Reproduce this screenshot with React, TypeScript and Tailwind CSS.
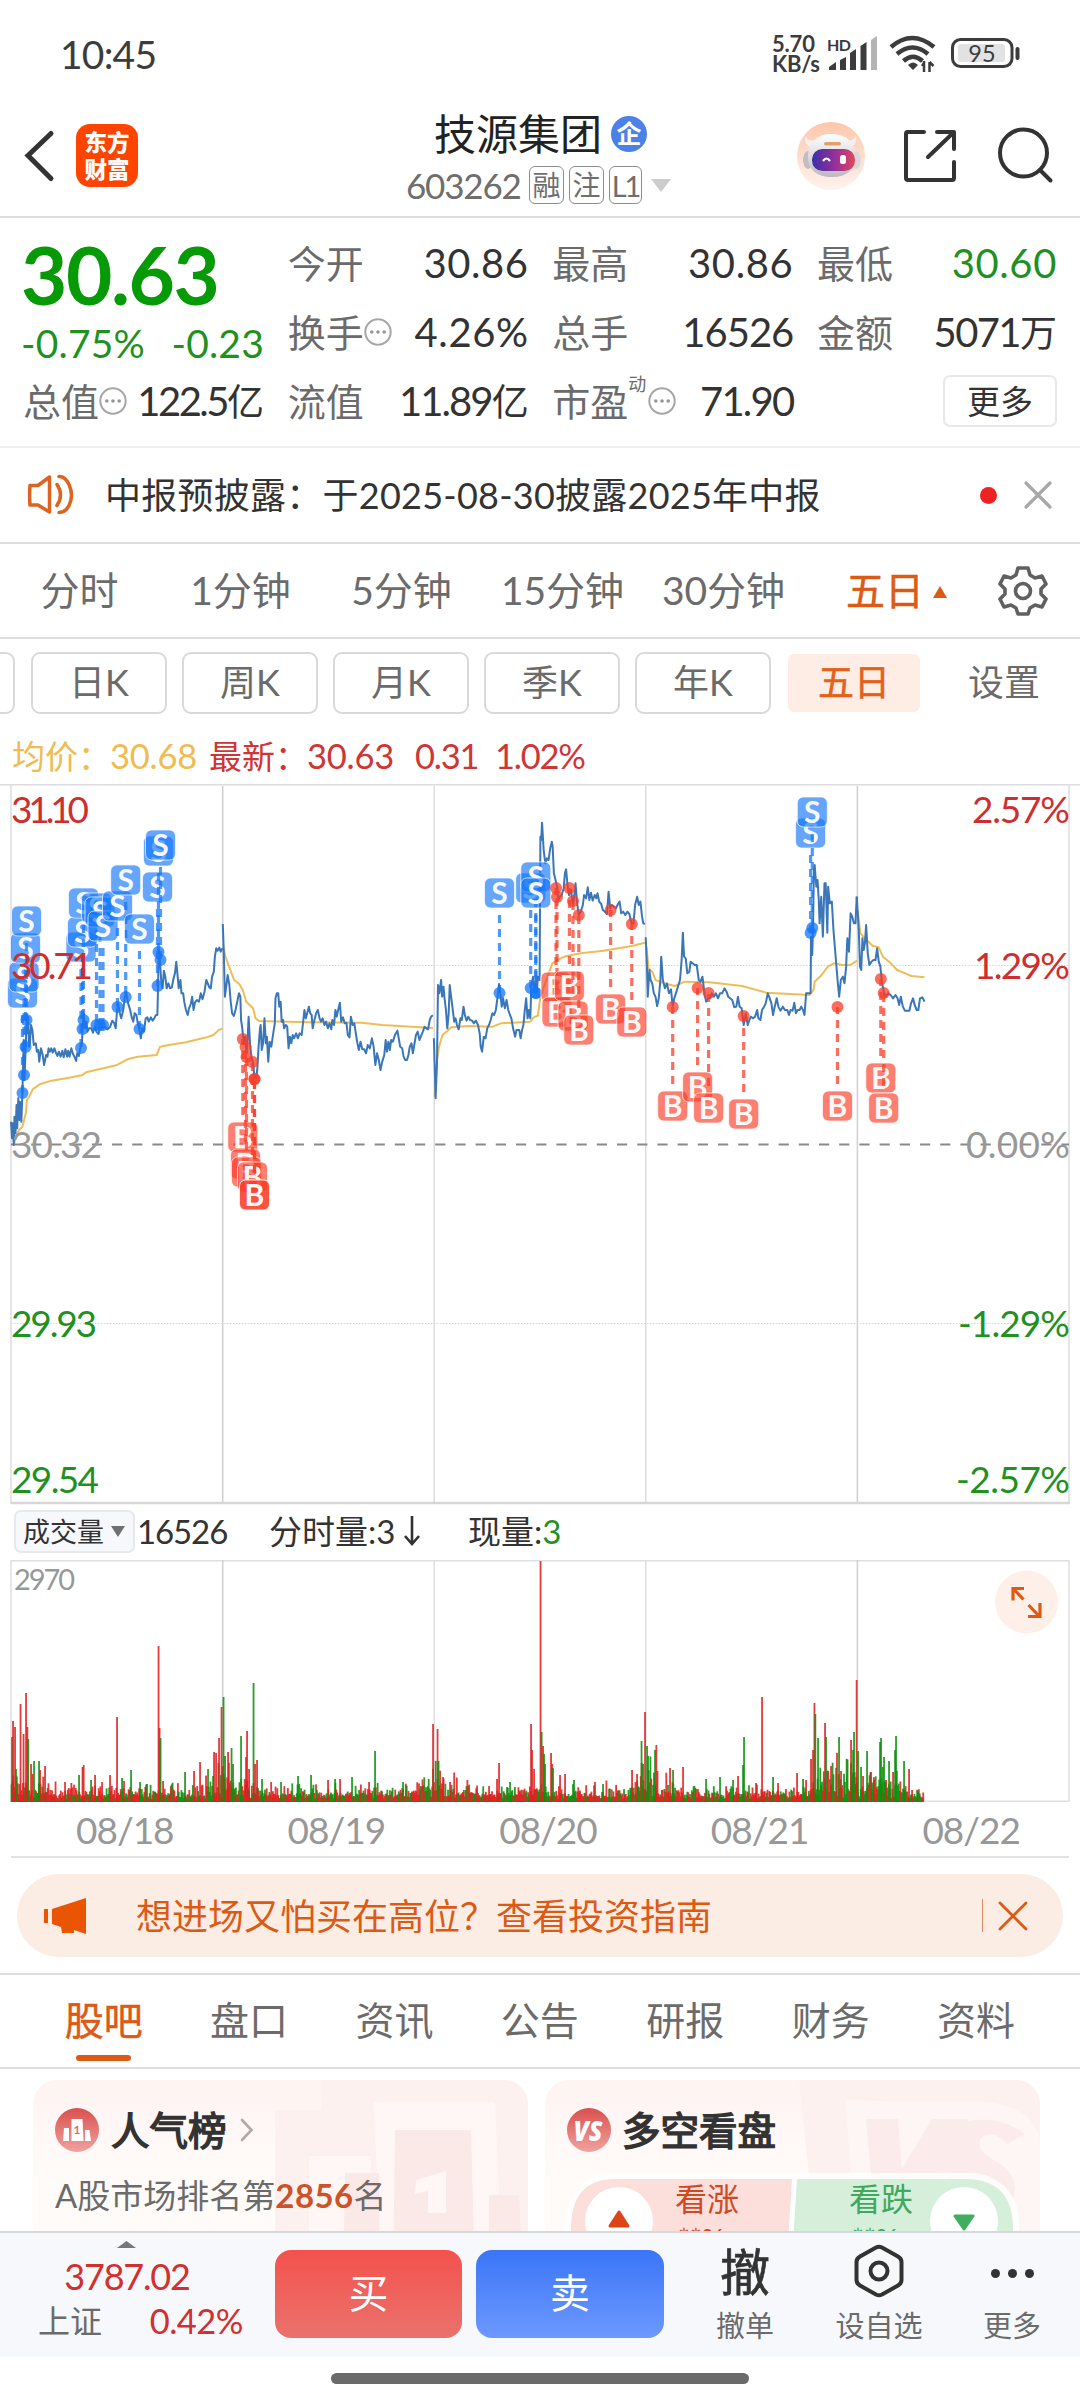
import React from "react";

const day1 =
  "32,1025 35,1075 37,1030 40,1095 42,1010 45,1060 48,975 50,1045 53,955 56,1020 58,965 62,1025 65,940 67,860 69,780 71,900 74,820 77,720 80,760 82,710 84,800 87,790 90,735 94,750 98,795 104,790 107,815 111,810 114,845 119,805 124,825 128,855 134,825 138,830 141,805 145,815 149,805 153,818 158,805 163,820 167,828 171,815 176,830 181,812 185,832 190,808 195,830 198,812 202,830 207,805 212,822 216,830 221,843 224,820 229,828 233,805 238,790 240,740 243,700 247,745 251,725 254,755 259,745 265,745 270,758 275,740 280,755 286,762 290,745 298,742 305,740 312,748 320,740 326,722 331,728 336,745 340,690 343,670 347,695 352,715 358,690 362,655 366,635 372,670 378,690 382,710 387,725 391,700 396,705 401,735 405,750 409,775 413,745 418,755 423,715 428,712 432,725 438,712 443,722 448,715 453,705 457,705 459,620 461,510 464,530 468,600 472,625 476,572 480,590 484,625 489,610 494,625 499,622 503,600 508,580 512,545 516,590 519,625 524,600 527,640 532,640 535,665 540,690 545,705 549,685 554,672 558,650 562,690 566,668 572,660 578,665 583,640 588,658 594,635 599,600 604,612 608,622 612,625 616,590 621,575 624,530 628,505 632,512 637,503 641,515 646,505";
const day2 =
  "647,432 650,520 653,650 657,620 661,585 666,615 670,665 674,700 679,708 684,690 690,660 694,640 698,650 700,720 703,740 708,790 712,770 716,820 719,780 722,710 726,790 730,830 735,850 739,890 744,895 747,870 751,800 755,745 757,735 760,810 764,790 768,715 772,790 775,770 779,845 783,785 788,800 792,770 798,730 800,655 804,640 808,640 811,680 815,665 818,725 822,720 825,745 830,735 834,740 838,805 842,770 846,790 850,765 854,775 860,760 865,775 870,760 876,765 881,720 884,690 888,715 892,700 897,680 901,700 905,705 908,745 913,720 918,700 923,690 928,715 932,725 937,715 942,735 947,725 952,745 957,730 962,748 965,720 970,735 974,690 978,710 982,690 987,668 991,725 996,712 1001,730 1006,728 1010,765 1015,772 1019,710 1024,735 1029,730 1034,765 1038,790 1042,810 1047,785 1052,808 1058,808 1063,820 1068,795 1074,805 1080,775 1085,800 1090,855 1095,820 1100,840 1105,870 1110,845 1116,825 1120,780 1124,815 1128,785 1132,810 1136,780 1141,785 1147,765 1154,752 1158,775 1162,800 1168,805 1172,830 1177,840 1182,840 1186,825 1190,800 1195,790 1199,820 1203,795 1208,765 1213,755 1218,780 1222,770 1228,755 1233,740 1238,745 1243,748 1248,720 1252,710 1257,706";
const day3a =
  "1260,775 1265,955 1269,850 1272,615 1276,640 1281,600 1284,650 1288,620 1291,655 1295,690 1299,745 1303,700 1306,615 1310,650 1315,690 1319,725 1323,715 1327,735 1332,748 1337,715 1341,720 1346,680 1350,705 1355,722 1360,710 1365,720 1371,722 1376,730 1382,722 1388,735 1393,760 1396,800 1400,815 1405,770 1410,775 1415,745 1420,735 1425,720 1430,700 1435,705 1440,690 1445,650 1449,612 1453,640 1457,680 1461,655 1466,685 1471,660 1476,690 1481,705 1485,715 1490,745 1496,770 1500,750 1504,750 1508,750 1512,775 1516,750 1520,735 1524,690 1528,655 1532,715 1536,690 1540,715 1543,620 1548,590 1553,640 1557,585";
const day3b =
  "235,585 237,640 240,590 244,600 246,170 248,180 250,128 254,210 258,250 262,235 266,240 270,205 274,185 276,200 279,280 283,300 287,320 290,360 294,350 298,345 303,325 306,280 309,268 312,310 316,345 321,330 325,370 328,360 332,310 336,370 340,405 345,395 350,375 353,345 358,355 362,322 366,360 370,338 374,362 379,345 383,355 386,340 390,365 395,372 399,390 404,395 409,402 413,335 417,385 421,375 426,380 431,385 436,372 440,365 444,400 449,395 454,405 459,395 464,402 469,430 474,430 478,375 483,350 487,375 491,365 495,410 498,430 502,432";
const day4 =
  "504,472 507,560 509,650 513,570 516,600 520,610 524,640 528,650 532,678 536,655 540,600 542,530 546,600 551,625 556,610 561,640 566,628 570,678 574,655 578,640 583,620 588,600 592,540 595,458 598,530 602,535 606,580 611,575 614,545 619,550 624,555 629,555 634,600 638,605 643,590 648,640 652,665 657,655 662,655 666,640 671,650 676,640 681,655 686,640 691,640 697,625 702,635 706,650 711,655 716,660 721,682 726,680 730,650 734,680 739,685 744,735 749,700 754,735 758,720 762,710 767,715 772,710 777,690 780,715 785,720 789,690 794,680 798,670 803,640 808,655 812,670 816,705 820,680 825,655 829,680 834,692 840,680 845,690 851,690 855,705 859,690 864,692 868,668 872,700 876,690 881,690 885,680 890,692 893,705 897,640 908,640 909,470 912,525 914,440 916,270 918,255 922,320 925,300 928,360 930,430 934,350 938,470 942,310 945,310 949,458 951,320 955,370 960,365 964,450 970,540 974,600 978,650 982,600 987,590 991,610 995,560 998,475 1002,515 1006,400 1010,410 1014,430 1018,430 1021,350";
const day5 =
  "1021,350 1026,450 1029,560 1032,570 1035,475 1038,510 1041,490 1044,435 1048,520 1052,555 1057,545 1062,540 1067,540 1071,505 1075,545 1079,560 1082,600 1088,640 1092,650 1098,640 1104,645 1110,655 1116,645 1121,655 1125,675 1129,650 1134,680 1139,692 1150,692 1154,670 1159,655 1163,675 1168,690 1172,690 1176,655 1182,652 1187,665";

const avgLeft = [
  "40,1095 45,1075 55,1050 65,1040 75,1000 78,960 85,950 95,928 115,913 150,902 200,893 240,885 250,877 300,865 340,855 370,838 400,830 455,825 465,800 490,795 540,787 600,772 620,765 635,750 646,746",
  "648,500 655,530 665,560 680,600 695,612 705,630 715,665 735,685 742,715 752,723 900,727 1050,728 1110,735 1257,744",
  "1262,950 1268,850 1275,800 1285,765 1300,752 1310,742 1360,738 1430,740 1455,730 1540,725 1550,712 1566,705",
];
const avgRight = [
  "240,705 246,650 258,610 268,575 275,550 295,535 310,528 345,520 400,512 470,498 502,488",
  "506,500 511,565 520,575 528,600 545,608 575,618 600,605 660,607 740,618 800,638 905,645 915,630 918,605 935,585 950,560 965,550 985,555 1005,555 1022,542",
  "1023,390 1030,460 1045,480 1060,497 1075,502 1085,530 1105,550 1120,570 1140,580 1155,588 1187,592",
];

type Trade = [x: number, labelY: number, dotY: number];

const sells: Trade[] = [
  [22.5, 209, 309], [24, 193, 291], [25.5, 164, 263], [26.5, 137, 236],
  [81, 163, 264], [82.5, 148, 245], [83.5, 119, 236],
  [96.5, 124, 241], [100, 128, 241], [103, 142, 241],
  [117.5, 122, 223], [125.7, 96, 213], [139.5, 145, 245],
  [157.5, 103, 202], [158.5, 67, 168], [160.5, 61, 176],
  [499.5, 109, 209],
  [530.7, 104, 204], [535.8, 93, 209], [535.8, 109, 209],
  [810.6, 49, 149], [812.3, 28, 144],
];
const buys: Trade[] = [
  [242.8, 353, 255], [245.5, 380, 263], [246.5, 388, 273], [252.5, 393, 278], [254.5, 411, 295], [254.5, 411, 295],
  [556, 203, 104], [557, 228, 113], [569.4, 202, 104], [573, 232, 117], [578.8, 246, 131],
  [610.6, 225, 126], [631.8, 238, 140],
  [672.7, 322, 223], [697.6, 303, 204], [708.6, 324, 209], [743.7, 330, 232],
  [837.5, 322, 223], [880.8, 294, 195], [883.7, 324, 209],
];

// [x, height, up?]
const spikes: [number, number, number][] = [
  [12, 65, 0], [13, 81, 1], [15, 75, 1], [16, 33, 0], [20.5, 98, 1], [23.5, 68, 1], [26, 109, 1], [27.3, 75, 1], [28.2, 63, 0],
  [31, 38, 1], [34, 41, 0], [39, 41, 0], [40, 32, 1], [45, 36, 1], [65, 20, 1], [79, 27, 0], [82.5, 35, 1], [83.6, 37, 1],
  [91, 22, 0], [95, 27, 1], [102, 20, 1], [110, 27, 1], [117, 85, 1], [122, 24, 0], [124, 21, 1], [131, 32, 0], [140, 20, 0],
  [147, 18, 0], [158.5, 156, 1], [159.5, 74, 1], [160.5, 64, 0], [163, 21, 1], [185, 30, 0], [194, 31, 1], [200, 40, 1],
  [208, 33, 0], [214, 50, 1], [216, 49, 1], [219, 64, 1], [221.5, 95, 1], [223.5, 105, 0], [225, 46, 0], [228, 50, 1],
  [231.5, 54, 0], [233, 38, 0], [241, 66, 0], [246, 45, 1], [247, 71, 1], [249, 33, 1], [253.5, 119, 0], [255, 38, 1],
  [257, 42, 1], [262, 23, 0], [281, 20, 0], [298, 26, 0], [311, 27, 0], [328, 22, 1], [335, 23, 0], [340, 23, 1],
  [352, 25, 0], [369, 20, 1], [375, 51, 0], [403, 20, 0], [433, 78, 1], [437.5, 73, 1], [438.5, 41, 0], [443, 25, 1],
  [450, 20, 1], [489, 16, 1], [497, 23, 1], [499, 39, 1], [510, 20, 0], [531, 78, 1], [532, 52, 1], [534, 33, 1],
  [540.5, 241, 1], [541.6, 70, 0], [543, 56, 1], [544, 48, 0], [545, 38, 0], [551, 49, 1], [552, 38, 1], [553, 34, 0],
  [560, 27, 1], [565, 28, 1], [574, 22, 0], [603, 18, 0], [632, 32, 1], [637, 28, 1], [641.5, 61, 0], [643, 38, 0],
  [645, 90, 1], [647, 56, 0], [648, 46, 0], [655, 52, 0], [656.3, 57, 1], [670, 34, 1], [673, 32, 0], [683, 35, 1],
  [706, 23, 0], [720, 25, 0], [733, 22, 0], [738, 26, 1], [743, 37, 0], [744, 65, 0], [756, 19, 1], [762, 105, 1],
  [773, 25, 0], [778, 19, 1], [797, 29, 1], [803, 23, 0], [806, 22, 1], [811, 43, 1], [813, 52, 1], [814.4, 99, 1],
  [815.3, 88, 0], [818, 64, 0], [825, 79, 1], [826, 65, 0], [831, 36, 1], [839, 65, 0], [841, 31, 1], [851, 62, 1],
  [853, 52, 0], [854, 70, 0], [856.6, 122, 1], [858, 51, 0], [861, 35, 0], [863, 26, 1], [867, 51, 0], [871, 30, 1],
  [874, 22, 1], [880, 60, 0], [881, 64, 0], [884, 45, 0], [886, 22, 1], [889, 41, 0], [893, 30, 1], [895, 52, 0],
  [896, 66, 0], [904, 41, 0], [909, 33, 1], [912, 12, 1], [918, 11, 0],
];

const dayStarts = [11, 222.5, 434, 646, 857.5];

function buildVolume() {
  const bars: [number, number, number][] = [];
  let seed = 7;
  const rnd = () => {
    seed = (seed * 16807) % 2147483647;
    return seed / 2147483647;
  };
  for (let x = 11.5; x < 924; x += 0.88) {
    const start = dayStarts.filter((d) => d <= x).pop()!;
    const t = x - start;
    let top = 12 + 26 * Math.exp(-t / 18) + 22 * Math.exp(-(211 - t) / 12);
    if (x > 815 && x < 857) top = 38;
    if (x > 857) top = 26;
    if (x > 908) top = 9;
    const up = rnd() > (x > 815 && x < 905 ? 0.6 : 0.42) ? 1 : 0;
    bars.push([x, 3 + rnd() * rnd() * top * 1.2 + rnd() * top * 0.35, up]);
  }
  return bars.concat(spikes);
}

const volume = buildVolume();

const Marker = ({ trade, kind }: { trade: Trade; kind: "B" | "S" }) => {
  const [x, labelY, dotY] = trade;
  const color = kind === "S" ? "#1677fa" : "#fa3c28";
  const from = kind === "S" ? labelY + 22 : labelY - 22;
  return (
    <g>
      <line x1={x} x2={x} y1={from} y2={dotY} stroke={color} strokeOpacity=".75" strokeWidth="3.2" strokeDasharray="8 6" />
      <circle cx={x} cy={dotY} r="6" fill={color} fillOpacity=".75" />
      <rect x={x - 15} y={labelY - 15} width="30" height="30" rx="6" fill={color} fillOpacity=".66" stroke="#fff" strokeOpacity=".7" strokeWidth="1" />
      <text x={x} y={labelY + 10.5} textAnchor="middle" fontSize="30" fontWeight="700" fill="#fff" fillOpacity=".95">
        {kind}
      </text>
    </g>
  );
};

const PriceChart = () => (
  <svg className="block" width="1080" height="721" viewBox="0 0 1080 721" fontFamily="Lato, sans-serif">
    <g stroke="#dcdcdf" strokeWidth="1.5">
      <line x1="0" x2="1080" y1=".75" y2=".75" />
      <line x1="11" x2="11" y1="0" y2="720" />
      <line x1="222.7" x2="222.7" y1="2" y2="720" stroke="#cfcfd2" />
      <line x1="434.2" x2="434.2" y1="2" y2="720" />
      <line x1="645.7" x2="645.7" y1="2" y2="720" />
      <line x1="857.4" x2="857.4" y1="2" y2="720" stroke="#cfcfd2" />
      <line x1="1069" x2="1069" y1="0" y2="720" />
    </g>
    <line x1="11" x2="1069" y1="181.5" y2="181.5" stroke="#d4d4d4" strokeDasharray="1.5 1.5" />
    <line x1="11" x2="1069" y1="539.5" y2="539.5" stroke="#d4d4d4" strokeDasharray="1.5 1.5" />
    <line x1="11" x2="1069" y1="360.5" y2="360.5" stroke="#8a8a8a" strokeWidth="1.8" strokeDasharray="10.2 10" />
    <line x1="11" x2="1070" y1="719" y2="719" stroke="#d6d6d8" strokeWidth="2.4" />

    <g fill="none" stroke="#efbd55" strokeWidth="2" strokeLinejoin="round">
      <g transform="translate(0 -4) scale(.34435 .33333)">
        {avgLeft.map((p) => (
          <polyline key={p} points={p} vectorEffect="non-scaling-stroke" />
        ))}
      </g>
      <g transform="translate(440 -4) scale(.40816 .33333)">
        {avgRight.map((p) => (
          <polyline key={p} points={p} vectorEffect="non-scaling-stroke" />
        ))}
      </g>
    </g>
    <g fill="none" stroke="#3a76b8" strokeWidth="2" strokeLinejoin="round">
      <g transform="translate(0 -4) scale(.34435 .33333)">
        {[day1, day2, day3a].map((p) => (
          <polyline key={p} points={p} vectorEffect="non-scaling-stroke" />
        ))}
      </g>
      <g transform="translate(440 -4) scale(.40816 .33333)">
        {[day3b, day4, day5].map((p) => (
          <polyline key={p} points={p} vectorEffect="non-scaling-stroke" />
        ))}
      </g>
    </g>

    {sells.map((t, i) => (
      <Marker key={i} trade={t} kind="S" />
    ))}
    {buys.map((t, i) => (
      <Marker key={i} trade={t} kind="B" />
    ))}

    <g fontSize="37">
      <g fill="#cf2e2e">
        <text x="11" y="39" textLength="78">31.10</text>
        <text x="11" y="195" textLength="82">30.71</text>
        <text x="1070" y="39" textAnchor="end" textLength="98">2.57%</text>
        <text x="1070" y="195" textAnchor="end" textLength="96">1.29%</text>
      </g>
      <g fill="#989898">
        <text x="11" y="374" textLength="91">30.32</text>
        <text x="1070" y="374" textAnchor="end" textLength="104">0.00%</text>
      </g>
      <g fill="#1f911f">
        <text x="11" y="553" textLength="86">29.93</text>
        <text x="11" y="709" textLength="88">29.54</text>
        <text x="1070" y="553" textAnchor="end" textLength="112">-1.29%</text>
        <text x="1070" y="709" textAnchor="end" textLength="114">-2.57%</text>
      </g>
    </g>
  </svg>
);

const VolumeChart = () => (
  <svg className="block" width="1080" height="242" viewBox="0 0 1080 242" fontFamily="Lato, sans-serif">
    <g stroke="#dfdfe1" strokeWidth="1.5" fill="none">
      <rect x="11" y=".75" width="1058" height="240.5" />
      <line x1="222.7" x2="222.7" y1="0" y2="241" stroke="#cfcfd2" />
      <line x1="434.2" x2="434.2" y1="0" y2="241" />
      <line x1="645.7" x2="645.7" y1="0" y2="241" />
      <line x1="857.4" x2="857.4" y1="0" y2="241" stroke="#cfcfd2" />
    </g>
    {volume.map(([x, h, up], i) => (
      <rect key={i} x={x - 0.85} y={242 - h} width="1.8" height={h} fill={up ? "#e01f1f" : "#0c8f0c"} fillOpacity=".88" />
    ))}
    <text x="14" y="30" fontSize="29" fill="#989898" textLength="61">2970</text>
    <circle cx="1026.5" cy="42" r="31.5" fill="#fef0e8" />
    <g fill="none" stroke="#dd5a14" strokeWidth="3.2">
      <path d="M1024 28.500h-11v12M1013 28.500l10.500 11M1028.500 45l10.500 11M1040 43v13.500h-12" />
    </g>
  </svg>
);

const Dots = () => (
  <svg className="shrink-0" width="28" height="28" viewBox="0 0 28 28">
    <circle cx="14" cy="14" r="12.700" fill="none" stroke="#a6a6a6" strokeWidth="2" />
    <g fill="#969696">
      <circle cx="7.800" cy="14" r="1.800" />
      <circle cx="14" cy="14" r="1.800" />
      <circle cx="20.200" cy="14" r="1.800" />
    </g>
  </svg>
);

interface StatProps {
  label: string;
  value: string;
  unit?: string;
  className?: string;
  children?: React.ReactNode;
}

const Stat = ({ label, value, unit, className = "text-[#333] tracking-[0.6px]", children }: StatProps) => (
  <div className="flex h-[69px] items-center justify-between">
    <div className="flex items-center text-[#6b6b6b]">
      <span>{label}</span>
      {children}
    </div>
    <span className={`whitespace-nowrap text-[40px] ${className}`}>
      {value}
      {unit && <span className="text-[37px] tracking-normal">{unit}</span>}
    </span>
  </div>
);

const StatusBar = () => (
  <div className="flex h-[108px] items-center justify-between pl-[60px] pr-[55px] text-[#3c3c3c]">
    <span className="text-[39px] tracking-[-0.8px]">10:45</span>
    <div className="flex items-center">
      <div className="w-[56px] text-[22px] font-bold leading-[20px] tracking-[-0.2px]">
        <div>5.70</div>
        <div>KB/s</div>
      </div>
      <svg width="197" height="40" viewBox="0 0 197 40" fontFamily="Lato, sans-serif">
        <text x="-1" y="17" fontSize="16" fontWeight="700" fill="#3c3c3c" textLength="24">HD</text>
        <g fill="#3c3c3c">
          <path d="M1 36v-3l7-5v8zM12 36V26l6-3v13zM22 36V19l6-4v21zM32.500 36V12l6-4v28z" />
          <path d="M43 36V6l6-4v34z" fill="#b4b4b4" />
          <path d="M85 36l-5-5q5-5 10 0z" />
        </g>
        <g fill="none" stroke="#3c3c3c" strokeWidth="4.500">
          <path d="M63 13q21-18 43 0" />
          <path d="M69 20q15.500-13 31 0" />
          <path d="M75.500 27q9.500-8.500 19 0" />
          <path d="M96 27v11M101.500 28v10M94 32l2-3M101.500 28l4 4" strokeWidth="2.500" />
        </g>
        <rect x="124.500" y="5.500" width="59.500" height="27" rx="8" fill="none" stroke="#3c3c3c" strokeWidth="3" />
        <rect x="130" y="10" width="47" height="18" rx="3" fill="#e2e2e2" />
        <path d="M189.500 15v9" stroke="#3c3c3c" strokeWidth="4" strokeLinecap="round" />
        <text x="154" y="27.5" textAnchor="middle" fontSize="23.5" fill="#3c3c3c">95</text>
      </svg>
    </div>
  </div>
);

const Header = () => (
  <div className="flex h-[110px] items-start border-b-2 border-[#dedee0] pl-[22px]">
    <svg className="mt-[20px]" width="36" height="56" viewBox="0 0 36 56">
      <path d="M29 5.500L6 27.500l23 23" fill="none" stroke="#333" strokeWidth="5" strokeLinecap="round" />
    </svg>
    <div className="ml-[18px] mt-[16px] flex h-[63px] w-[62px] flex-col items-center justify-center rounded-[14px] bg-[#ff4400] text-[22.5px] font-black leading-[27px] text-white">
      <span>东方</span>
      <span>财富</span>
    </div>
    <div className="ml-[264px] w-[280px]">
      <div className="ml-[32px] flex h-[51px] items-center">
        <span className="text-[42px] text-[#222]">技源集团</span>
        <span className="ml-[9px] flex h-[36px] w-[36px] items-center justify-center rounded-full bg-[#4c82e8] text-[25px] font-bold text-white">企</span>
      </div>
      <div className="flex h-[52px] items-center text-[#6e6e6e]">
        <span className="ml-[4px] w-[123px] text-[35px] tracking-[-1.2px]">603262</span>
        <span className="flex h-[38px] w-[35px] items-center justify-center rounded-[6px] border-[1.5px] border-[#8d8d8d] text-[28px]">融</span>
        <span className="ml-[5px] flex h-[38px] w-[35px] items-center justify-center rounded-[6px] border-[1.5px] border-[#8d8d8d] text-[28px]">注</span>
        <span className="ml-[5px] flex h-[38px] w-[33px] items-center justify-center rounded-[6px] border-[1.5px] border-[#8d8d8d] text-[29px] tracking-[-2px]">L1</span>
        <svg className="ml-[9px]" width="20" height="13" viewBox="0 0 20 13">
          <path d="M0 0h20L10 13z" fill="#ccc" />
        </svg>
      </div>
    </div>
    <svg className="ml-[115px] mt-[14px]" width="68" height="68" viewBox="0 0 68 68">
      <defs>
        <linearGradient id="halo" x2="0" y2="1">
          <stop offset="0" stopColor="#fdc7ab" />
          <stop offset="1" stopColor="#fff3ee" />
        </linearGradient>
        <linearGradient id="visor">
          <stop offset="0" stopColor="#3c2fa8" />
          <stop offset=".55" stopColor="#9a2f9a" />
          <stop offset="1" stopColor="#e0485a" />
        </linearGradient>
        <linearGradient id="head" x2="0" y2="1">
          <stop offset="0" stopColor="#fff" />
          <stop offset="1" stopColor="#bdb9c2" />
        </linearGradient>
      </defs>
      <circle cx="34" cy="34" r="34" fill="url(#halo)" />
      <path d="M8 14q4 6 9 4l-3 7q-7-2-6-11zM59 14q-4 6-9 4l3 7q8-2 6-11z" fill="#f3f0f0" />
      <ellipse cx="11" cy="38" rx="5" ry="9" fill="#c2bdc2" />
      <ellipse cx="59" cy="38" rx="5" ry="9" fill="#dcd6d9" />
      <path d="M34 12c16 0 24 9 24 23 0 13-8 20-23 20S11 48 11 35s8-23 23-23z" fill="url(#head)" />
      <rect x="15" y="27" width="43" height="22" rx="10.500" fill="url(#visor)" />
      <path d="M26 39q3.500-5 7 0" fill="none" stroke="#fff" strokeWidth="2.200" />
      <rect x="43" y="33" width="6" height="9" rx="2.500" fill="#fff" />
      <rect x="27" y="20" width="17" height="3.500" rx="1.700" fill="#e0a070" />
    </svg>
    <svg className="ml-[36px] mt-[18px]" width="60" height="60" viewBox="0 0 60 60">
      <path d="M23 6H6.500Q5 6 5 8v44q0 2 2 2h44q2 0 2-2V36M36 6h17v17M52 7L27 31" fill="none" stroke="#333" strokeWidth="4" strokeLinecap="round" strokeLinejoin="round" />
    </svg>
    <svg className="ml-[34px] mt-[17px]" width="60" height="60" viewBox="0 0 60 60">
      <circle cx="28.500" cy="28" r="23.500" fill="none" stroke="#333" strokeWidth="4" />
      <path d="M45 45l10.500 10.500" stroke="#333" strokeWidth="4" strokeLinecap="round" />
    </svg>
  </div>
);

const Quote = () => (
  <div className="flex h-[230px] justify-between border-b-2 border-[#efeff1] pl-[23px] pr-[23px] pt-[10px] text-[38px]">
    <div className="w-[241px] text-[#069a06]">
      <div className="ml-[-2px] flex h-[92px] items-center text-[80px] font-bold tracking-[-1.4px]">30.63</div>
      <div className="flex h-[46px] items-center justify-between whitespace-nowrap text-[39px] tracking-[0.2px] text-[#1f911f]">
        <span className="ml-[-2px]">-0.75%</span>
        <span>-0.23</span>
      </div>
      <Stat label="总值" value="122.5" unit="亿" className="tracking-[-2.5px] text-[#333]">
        <Dots />
      </Stat>
    </div>
    <div className="w-[241px]">
      <Stat label="今开" value="30.86" />
      <Stat label="换手" value="4.26%">
        <Dots />
      </Stat>
      <Stat label="流值" value="11.89" unit="亿" className="tracking-[-1.9px] text-[#333]" />
    </div>
    <div className="w-[241px]">
      <Stat label="最高" value="30.86" />
      <Stat label="总手" value="16526" className="tracking-[-1px] text-[#333]" />
      <Stat label="市盈" value="71.90" className="tracking-[-1.8px] text-[#333]">
        <span className="mb-[34px] text-[18px]">动</span>
        <span className="ml-[2px]">
          <Dots />
        </span>
      </Stat>
    </div>
    <div className="w-[240px]">
      <Stat label="最低" value="30.60" className="tracking-[0.6px] text-[#1f911f]" />
      <Stat label="金额" value="5071" unit="万" className="tracking-[-1.6px] text-[#333]" />
      <div className="ml-auto mt-[9px] flex h-[52px] w-[114px] items-center justify-center rounded-[7px] border-2 border-[#e8e8ea] text-[33px] text-[#333]">更多</div>
    </div>
  </div>
);

const Notice = () => (
  <div className="flex h-[96px] items-center border-b-2 border-[#dedee0] pl-[26px]">
    <svg width="50" height="46" viewBox="0 0 50 46" fill="none" stroke="#dd6420" strokeWidth="3.500" strokeLinejoin="round">
      <path d="M4 13.500h8L23.500 5v35L12 33H4q-.8-9.500 0-19.500z" />
      <path d="M31 12.500q7 10 0 21M33 4.500q6-.5 10 8 5 11 0 21-3.500 7-10 7" strokeLinecap="round" />
    </svg>
    <span className="ml-[29px] w-[875px] whitespace-nowrap text-[36px] tracking-[0.25px] text-[#333]">中报预披露：于2025-08-30披露2025年中报</span>
    <span className="h-[17px] w-[17px] rounded-full bg-[#ee2222]" />
    <svg className="ml-[26px]" width="30" height="30" viewBox="0 0 30 30">
      <path d="M3 3l24 24M27 3L3 27" stroke="#a8a8a8" strokeWidth="3.200" strokeLinecap="round" />
    </svg>
  </div>
);

const periods = ["分时", "1分钟", "5分钟", "15分钟", "30分钟"];

const PeriodTabs = () => (
  <div className="flex h-[95px] items-center border-b-2 border-[#dedee0] text-[39px] text-[#6b6b6b]">
    <div className="ml-[-1px] flex">
      {periods.map((p) => (
        <span key={p} className="w-[161px] text-center tracking-[-0.1px]">{p}</span>
      ))}
    </div>
    <span className="ml-[42px] text-[#dd5a14] [-webkit-text-stroke:0.5px_#dd5a14]">五日</span>
    <svg className="ml-[9px] mt-[2px]" width="14" height="12" viewBox="0 0 14 12">
      <path d="M0 12h14L7 0z" fill="#dd5a14" />
    </svg>
    <svg className="ml-[51px]" width="50" height="52" viewBox="0 0 50 52" fill="none" stroke="#606060" strokeWidth="3.600" strokeLinejoin="round">
      <path d="M20 3h10l2 7 5 3 7-2 4 8-5 5v5l5 5-4 8-7-2-5 3-2 6H20l-2-6-5-3-7 2-4-8 5-5v-5l-5-5 4-8 7 2 5-3z" />
      <circle cx="25" cy="26" r="7.500" />
    </svg>
  </div>
);

const kLines = ["日K", "周K", "月K", "季K", "年K"];

const KLineChips = () => (
  <div className="flex h-[87px] items-center text-[36px] text-[#6b6b6b]">
    <span className="h-[62px] w-[15px] rounded-r-[9px] border-2 border-l-0 border-[#d9d9db]" />
    <div className="ml-[16px] flex gap-[15px]">
      {kLines.map((k) => (
        <span key={k} className="flex h-[62px] w-[136px] items-center justify-center rounded-[9px] border-2 border-[#d9d9db] pb-[2px]">{k}</span>
      ))}
    </div>
    <span className="ml-[17px] flex h-[58px] w-[132px] items-center justify-center rounded-[6px] bg-[#fdede5] pb-[2px] text-[#e5611a] [-webkit-text-stroke:0.5px_#e5611a]">五日</span>
    <span className="ml-[48px] pb-[2px]">设置</span>
  </div>
);

const Legend = () => (
  <div className="flex h-[58px] items-center whitespace-nowrap pl-[12px] pt-[2px] text-[33px] text-[#cf3535]">
    <span className="w-[98px] text-[#f0bb50]">均价：</span>
    <span className="w-[99px] text-[34.5px] tracking-[-0.2px] text-[#f0bb50]">30.68</span>
    <span className="w-[98px]">最新：</span>
    <span className="w-[108px] text-[34.5px] tracking-[-0.2px]">30.63</span>
    <span className="w-[80px] text-[34.5px] tracking-[-1.2px]">0.31</span>
    <span className="text-[34.5px] tracking-[-1.2px]">1.02%</span>
  </div>
);

const VolumeInfo = () => (
  <div className="flex h-[55px] items-center whitespace-nowrap pb-[3px] pl-[14px] text-[33px] text-[#333]">
    <div className="flex h-[43px] w-[121px] items-center rounded-[7px] border-2 border-[#e6e9ee] bg-[#f7f8fb] pl-[7px] text-[27px]">
      成交量
      <svg className="ml-[7px]" width="14" height="11" viewBox="0 0 14 11">
        <path d="M0 0h14L7 11z" fill="#707070" />
      </svg>
    </div>
    <span className="ml-[2px] w-[132px] tracking-[-1.1px]">16526</span>
    <span className="w-[133px]">分时量:3</span>
    <svg width="20" height="32" viewBox="0 0 20 32">
      <path d="M10 1v28M3 21l7 8 7-8" fill="none" stroke="#333" strokeWidth="2.600" />
    </svg>
    <span className="ml-[46px]">
      现量:<span className="text-[#1f911f]">3</span>
    </span>
  </div>
);

const dates = ["08/18", "08/19", "08/20", "08/21", "08/22"];

const Banner = () => (
  <div className="mx-[17px] mt-[16px] flex h-[83px] items-center rounded-full bg-[#fcede4] text-[#dd5a14]">
    <svg className="ml-[27px]" width="43" height="38" viewBox="0 0 43 38" fill="#ea5504">
      <path d="M0 12h4v14H0zM8 12L42 1v36l-12-4v3H18l-1-6-9-3z" />
    </svg>
    <span className="ml-[49px] w-[846px] whitespace-nowrap text-[36px]">想进场又怕买在高位？查看投资指南</span>
    <span className="h-[33px] w-px bg-[#dd8a60]" />
    <svg className="ml-[14px]" width="32" height="32" viewBox="0 0 32 32">
      <path d="M3 3l26 26M29 3L3 29" stroke="#dd5a14" strokeWidth="2.800" strokeLinecap="round" />
    </svg>
  </div>
);

const sections = ["股吧", "盘口", "资讯", "公告", "研报", "财务", "资料"];

const SectionTabs = () => (
  <div className="mt-[16px] flex h-[96px] border-y-2 border-[#dedee0] pl-[31px] text-[39px] text-[#6b6b6b]">
    {sections.map((s, i) => (
      <div key={s} className={`flex w-[145.4px] flex-col items-center ${i === 0 ? "text-[#dd5a14] [-webkit-text-stroke:0.5px_#dd5a14]" : ""}`}>
        <span className="flex h-[80px] items-center pt-[11px]">{s}</span>
        {i === 0 && <span className="h-[6px] w-[55px] rounded-full bg-[#dd5a14]" />}
      </div>
    ))}
  </div>
);

const PopularityCard = () => (
  <div className="relative h-[200px] w-[495px] overflow-hidden rounded-[24px] bg-linear-to-b from-[#fef4f2] to-[#fffbf9] to-50% pl-[22px]">
    <svg className="absolute left-0 top-0" width="495" height="200" viewBox="0 0 495 200">
      <path d="M290 0h205v200H242V30h46z" fill="#fdf1ef" />
      <path d="M340 22h122l8 178H350zM276 76h62v124h-62z" fill="#fef7f5" />
      <path d="M362 50h76l4 150h-82zM312 93h34v107h-36zM456 115h30l4 85h-34z" fill="#fbe9e7" />
      <path d="M383 100l30-9v42h-18v-22l-13 3z" fill="#fef7f5" />
    </svg>
    <div className="relative flex h-[100px] items-center">
      <svg width="44" height="44" viewBox="0 0 44 44">
        <defs>
          <linearGradient id="badge" x2="0" y2="1">
            <stop offset="0" stopColor="#d9504e" />
            <stop offset="1" stopColor="#f0a29f" />
          </linearGradient>
        </defs>
        <circle cx="22" cy="22" r="22" fill="url(#badge)" />
        <path d="M9 20h5v13H8zM16.500 11h11l1 22h-12zM30 22h4.500l1.500 11h-6z" fill="#fff" />
        <text x="22" y="26" textAnchor="middle" fontSize="12" fontWeight="700" fill="#dd6a68">1</text>
      </svg>
      <span className="ml-[12px] text-[38.5px] text-[#333] [-webkit-text-stroke:1.5px_#333]">人气榜</span>
      <svg className="ml-[12px]" width="16" height="24" viewBox="0 0 16 24">
        <path d="M3 2l9.500 10L3 22" fill="none" stroke="#b0a9a9" strokeWidth="2.600" strokeLinecap="round" />
      </svg>
    </div>
    <div className="relative mt-[-3px] flex h-[36px] items-center whitespace-nowrap text-[33px] text-[#6b6b6b]">
      A股市场排名第<span className="font-bold tracking-[0.4px] text-[#cc5228]">2856</span>名
    </div>
  </div>
);

const SentimentCard = () => (
  <div className="relative h-[200px] w-[495px] overflow-hidden rounded-[24px] bg-linear-to-b from-[#fef4f2] to-[#fffbf9] to-50% pl-[22px]">
    <svg className="absolute left-0 top-0" width="495" height="200" viewBox="0 0 495 200">
      <path d="M254 0h241v200H275z" fill="#fdf1ef" />
      <path d="M300 20l70 2 70 0q50 5 55 40v130H315z" fill="#fef6f4" />
      <path d="M321 39h32l4 50 30-50h36l-48 110h-44z" fill="#fbebea" />
      <path d="M480 54q-20-16-50-14-34 4-40 30-2 18 20 32 18 10 4 26h50q16-30-12-46-26-14-14-26 12-6 24 8z" fill="#fbebea" />
    </svg>
    <div className="relative flex h-[100px] items-center">
      <svg width="44" height="44" viewBox="0 0 44 44" fontFamily="Open Sans, sans-serif">
        <circle cx="22" cy="22" r="22" fill="url(#badge)" />
        <text x="21" y="32.500" textAnchor="middle" fontSize="28" fontWeight="800" fontStyle="italic" fill="#fff" textLength="29" lengthAdjust="spacingAndGlyphs">VS</text>
      </svg>
      <span className="ml-[11px] text-[38.5px] text-[#333] [-webkit-text-stroke:1.5px_#333]">多空看盘</span>
    </div>
    <svg className="absolute left-[21px] top-[93px]" width="454" height="107" viewBox="0 0 454 107" fontFamily="Lato, 'Noto Sans CJK SC', sans-serif">
      <rect width="453" height="140" rx="48" fill="#fff" fillOpacity=".8" />
      <path d="M226 6H49Q5 6 5 56v60h214z" fill="#fcdedb" />
      <path d="M231 6h168q48 0 48 50v60H224z" fill="#d5efdb" />
      <circle cx="53" cy="48" r="34" fill="#fff" />
      <circle cx="398" cy="48" r="34" fill="#fff" />
      <path d="M53 39l9 14H44z" fill="#dd4418" stroke="#dd4418" strokeWidth="3" strokeLinejoin="round" />
      <path d="M398 56l9-13h-18z" fill="#3fae5e" stroke="#3fae5e" strokeWidth="3" strokeLinejoin="round" />
      <g fontSize="32">
        <text x="109" y="38" fill="#cf4a22">看涨</text>
        <text x="283" y="38" fill="#41a85f">看跌</text>
      </g>
      <g fontSize="28">
        <text x="112" y="76.5" fill="#cf4a22">**%</text>
        <text x="286" y="76.5" fill="#41a85f">**%</text>
      </g>
    </svg>
  </div>
);

const BottomBar = () => (
  <div className="flex h-[126px] border-t-2 border-[#d6d8dc] bg-[#f6f8fb]">
    <div className="w-[275px]">
      <svg className="ml-[117px] mt-[8px]" width="19" height="7" viewBox="0 0 19 7">
        <path d="M0 7h19L9.500 0z" fill="#777" />
      </svg>
      <div className="mt-[6px] flex h-[44px] w-[254px] items-center justify-center text-[36px] tracking-[-1.2px] text-[#d22f2f]">3787.02</div>
      <div className="flex h-[46px] items-center justify-between pl-[38px] pr-[32px]">
        <span className="text-[32px] text-[#6b6b6b]">上证</span>
        <span className="text-[34.5px] tracking-[-0.5px] text-[#d22f2f]">0.42%</span>
      </div>
    </div>
    <div className="mt-[17px] flex h-[88px] w-[187px] items-center justify-center rounded-[16px] bg-linear-to-b from-[#f4514c] to-[#ea716c] pb-[2px] text-[40px] text-white">买</div>
    <div className="ml-[14px] mt-[17px] flex h-[88px] w-[188px] items-center justify-center rounded-[16px] bg-linear-to-b from-[#3a75f7] to-[#6d98fe] pb-[2px] text-[40px] text-white">卖</div>
    <div className="ml-[36px] flex w-[90px] flex-col items-center">
      <span className="flex h-[77px] items-center text-[50px] text-[#333] [-webkit-text-stroke:0.7px_#333]">撤</span>
      <span className="flex h-[30px] items-center text-[29px] text-[#6b6b6b]">撤单</span>
    </div>
    <div className="ml-[34px] flex w-[110px] flex-col items-center">
      <svg className="mb-[12px] mt-[11px]" width="52" height="54" viewBox="0 0 52 54" fill="none" stroke="#333" strokeWidth="4">
        <path d="M23 3.500q3-1.500 6 0l16 9q3.500 2 3.500 5.500v18q0 3.500-3.500 5.500l-16 9q-3 1.500-6 0l-16-9q-3.500-2-3.500-5.500V18q0-3.500 3.500-5.500z" />
        <circle cx="26" cy="27" r="8.500" />
      </svg>
      <span className="flex h-[30px] items-center text-[29px] text-[#6b6b6b]">设自选</span>
    </div>
    <div className="ml-[33px] flex w-[90px] flex-col items-center">
      <div className="flex h-[77px] items-center gap-[8px] pt-[4px]">
        <span className="h-[9px] w-[9px] rounded-full bg-[#333]" />
        <span className="h-[9px] w-[9px] rounded-full bg-[#333]" />
        <span className="h-[9px] w-[9px] rounded-full bg-[#333]" />
      </div>
      <span className="flex h-[30px] items-center text-[29px] text-[#6b6b6b]">更多</span>
    </div>
  </div>
);

export default function App() {
  return (
    <div className="h-[2400px] w-[1080px] overflow-hidden bg-white font-[Lato,'Noto_Sans_CJK_SC',sans-serif] leading-none">
      <StatusBar />
      <Header />
      <Quote />
      <Notice />
      <PeriodTabs />
      <KLineChips />
      <Legend />
      <PriceChart />
      <VolumeInfo />
      <VolumeChart />
      <div className="mx-[11px] flex h-[56px] items-center border-b-2 border-[#e3e3e5] text-[37px] tracking-[-1px] text-[#989898]">
        {dates.map((d) => (
          <span key={d} className="w-[211.6px] pl-[16px] text-center">{d}</span>
        ))}
      </div>
      <Banner />
      <SectionTabs />
      <div className="flex h-[162px] gap-[17px] overflow-hidden pl-[33px] pt-[11px]">
        <PopularityCard />
        <SentimentCard />
      </div>
      <BottomBar />
      <div className="mx-auto mt-[16px] h-[11px] w-[418px] rounded-full bg-[#6a6a6a]" />
    </div>
  );
}
